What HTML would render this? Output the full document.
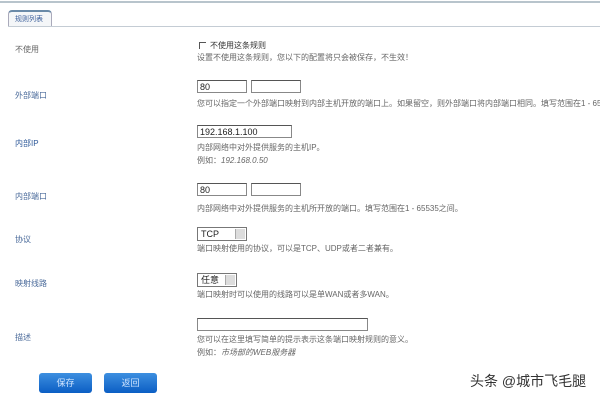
<!DOCTYPE html>
<html><head><meta charset="utf-8"><style>
html,body{margin:0;width:600px;height:400px;overflow:hidden}
body{background:#fff;position:relative;font-family:"Liberation Sans","Noto Sans CJK SC",sans-serif;font-size:8px;color:#666}
#w{position:absolute;left:0;top:0;width:600px;height:400px;overflow:hidden}
.a{position:absolute;white-space:nowrap}
.l{color:#4a6a9a;font-size:8px}
.in{position:absolute;height:13px;border:1px solid #888;border-top-color:#555;background:#fff;font-size:9px;line-height:13px;padding-left:2px;box-sizing:border-box;color:#222}
.sel{position:absolute;height:14px;border:1px solid #777;background:#fff;font-size:9px;line-height:12px;padding-left:3px;box-sizing:border-box;color:#222}
.sel i{position:absolute;right:1px;top:1px;width:9px;height:10px;background:#ddd;border-left:1px solid #aaa}
.btn{position:absolute;top:373px;height:20px;width:53px;border-radius:3px;background:linear-gradient(#3d8fe0,#0b5ec4);color:#cfe4ff;text-align:center;line-height:20px;font-size:9px}
</style></head><body><div id="w">
<div class="a" style="left:0;top:1px;width:600px;height:2px;background:#b8c4cc"></div>
<div class="a" style="left:8px;top:10px;width:44px;height:16px;border:1px solid #aab;border-bottom:none;border-top:2px solid #6a8aa8;border-radius:4px 4px 0 0;background:#f4f6f8;box-sizing:border-box"></div>
<div class="a" style="left:15px;top:14px;color:#3b5f9b;font-size:7px">规则列表</div>
<div class="a" style="left:52px;top:26px;width:548px;height:1px;background:#c4ccd4"></div>
<div class="a" style="left:8px;top:26px;width:44px;height:1px;background:#c4ccd4"></div>

<div class="a l" style="left:15px;top:44px;color:#666">不使用</div>
<div class="a l" style="left:15px;top:90px">外部端口</div>
<div class="a l" style="left:15px;top:138px;color:#2f5a9a">内部IP</div>
<div class="a l" style="left:15px;top:191px">内部端口</div>
<div class="a l" style="left:15px;top:234px">协议</div>
<div class="a l" style="left:15px;top:278px">映射线路</div>
<div class="a l" style="left:15px;top:332px">描述</div>

<div class="a" style="left:199px;top:42px;width:6px;height:6px;border-left:1px solid #555;border-top:1px solid #555"></div>
<div class="a" style="left:210px;top:40px;color:#333">不使用这条规则</div>
<div class="a" style="left:197px;top:52px">设置不使用这条规则，您以下的配置将只会被保存，不生效！</div>

<div class="in" style="left:197px;top:80px;width:50px">80</div>
<div class="in" style="left:251px;top:80px;width:50px"></div>
<div class="a" style="left:197px;top:98px">您可以指定一个外部端口映射到内部主机开放的端口上。如果留空，则外部端口将内部端口相同。填写范围在1 - 6553</div>

<div class="in" style="left:197px;top:125px;width:95px">192.168.1.100</div>
<div class="a" style="left:197px;top:142px">内部网络中对外提供服务的主机IP。</div>
<div class="a" style="left:197px;top:155px">例如：<i>192.168.0.50</i></div>

<div class="in" style="left:197px;top:183px;width:50px">80</div>
<div class="in" style="left:251px;top:183px;width:50px"></div>
<div class="a" style="left:197px;top:203px">内部网络中对外提供服务的主机所开放的端口。填写范围在1 - 65535之间。</div>

<div class="sel" style="left:197px;top:227px;width:50px">TCP<i></i></div>
<div class="a" style="left:197px;top:243px">端口映射使用的协议，可以是TCP、UDP或者二者兼有。</div>

<div class="sel" style="left:197px;top:273px;width:40px">任意<i></i></div>
<div class="a" style="left:197px;top:289px">端口映射时可以使用的线路可以是单WAN或者多WAN。</div>

<div class="in" style="left:197px;top:318px;width:171px"></div>
<div class="a" style="left:197px;top:334px">您可以在这里填写简单的提示表示这条端口映射规则的意义。</div>
<div class="a" style="left:197px;top:347px">例如：<i>市场部的WEB服务器</i></div>

<div class="btn" style="left:39px">保存</div>
<div class="btn" style="left:104px">返回</div>

<div class="a" style="left:470px;top:371px;font-size:14px;color:#333">头条 @城市飞毛腿</div>
</div></body></html>
